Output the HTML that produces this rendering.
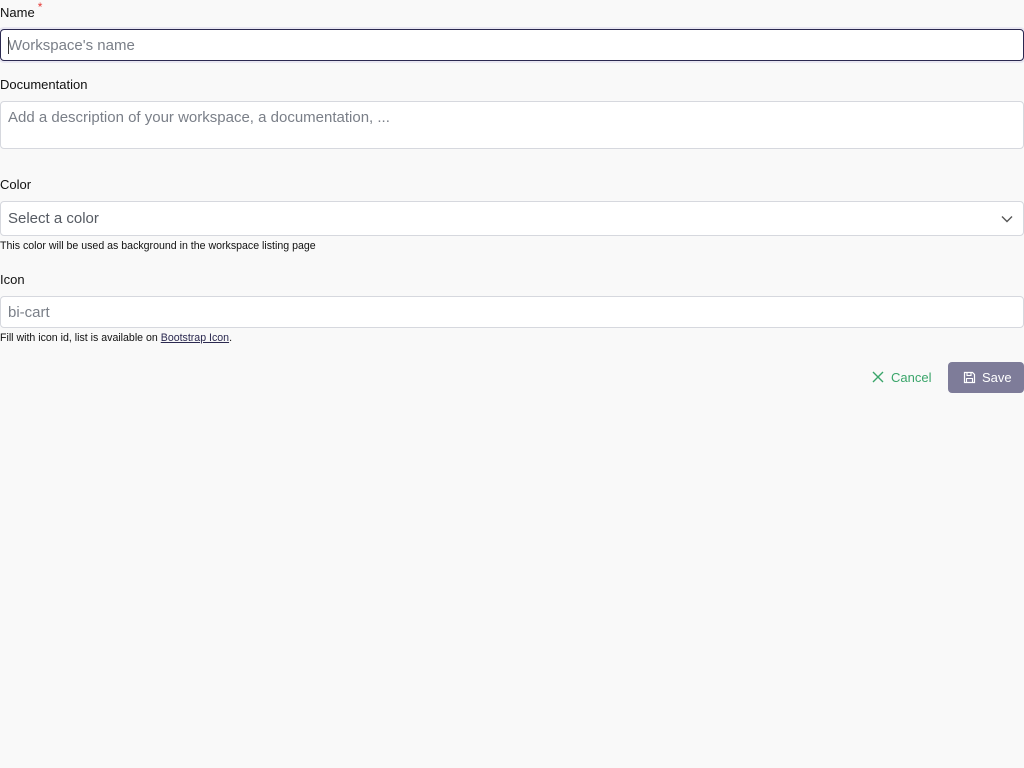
<!DOCTYPE html>
<html><head><style>
body{margin:0;background:#f9f9f9;font-family:"Liberation Sans",sans-serif;width:1024px;height:768px;position:relative;overflow:hidden}
.a{position:absolute}
.lbl{font-size:13px;color:#111}
.box{position:absolute;left:0;background:#fff;border:1px solid #d6d8de;border-radius:4px;box-sizing:border-box;width:1024px}
.ph{position:absolute;left:7px;font-size:15px;color:#7a7f88}
.help{font-size:10.6px;color:#111}
</style></head><body>
<div class="a lbl" style="left:0;top:5px">Name<span style="color:#e53935;font-size:12px;position:relative;top:-6px;left:3px">*</span></div>
<div class="box" style="top:29px;height:32px;border-color:#2b2950;box-shadow:0 0 0 2px rgba(120,110,200,.12)"><span class="ph" style="top:7px">Workspace's name</span><span class="a" style="left:7px;top:7px;width:1px;height:17px;background:#333"></span></div>
<div class="a lbl" style="left:0;top:77px">Documentation</div>
<div class="box" style="top:101px;height:48px"><span class="ph" style="top:7px">Add a description of your workspace, a documentation, ...</span></div>
<div class="a lbl" style="left:0;top:177px">Color</div>
<div class="box" style="top:201px;height:35px"><span class="ph" style="top:8px;color:#555a62">Select a color</span>
<svg class="a" style="right:10px;top:12px" width="12" height="10" viewBox="0 0 12 10"><path d="M1 2.5l5 5 5-5" fill="none" stroke="#555" stroke-width="1.4"/></svg></div>
<div class="a help" style="left:0;top:240px">This color will be used as background in the workspace listing page</div>
<div class="a lbl" style="left:0;top:272px">Icon</div>
<div class="box" style="top:296px;height:32px"><span class="ph" style="top:7px">bi-cart</span></div>
<div class="a help" style="left:0;top:332px">Fill with icon id, list is available on <span style="color:#2b2950;text-decoration:underline">Bootstrap Icon</span>.</div>
<div class="a" style="left:872px;top:370px;font-size:13px;color:#3aa56a">
<svg width="12" height="12" viewBox="0 0 12 12" style="vertical-align:-1px;margin-right:7px"><path d="M1 1l10 10M11 1L1 11" stroke="#3aa56a" stroke-width="1.4"/></svg>Cancel</div>
<div class="a" style="left:948px;top:362px;width:76px;height:31px;background:#7e7c99;border-radius:4px;color:#fff;font-size:13px;line-height:31px">
<svg width="13" height="13" viewBox="0 0 13 13" style="position:absolute;left:15px;top:9px"><path d="M1.5 1.5h8l2 2v8h-10z" fill="none" stroke="#fff" stroke-width="1.2"/><path d="M4 1.5v3h4v-3M3.5 11.5v-4h6v4" fill="none" stroke="#fff" stroke-width="1.1"/></svg>
<span style="position:absolute;left:34px">Save</span></div>
</body></html>
